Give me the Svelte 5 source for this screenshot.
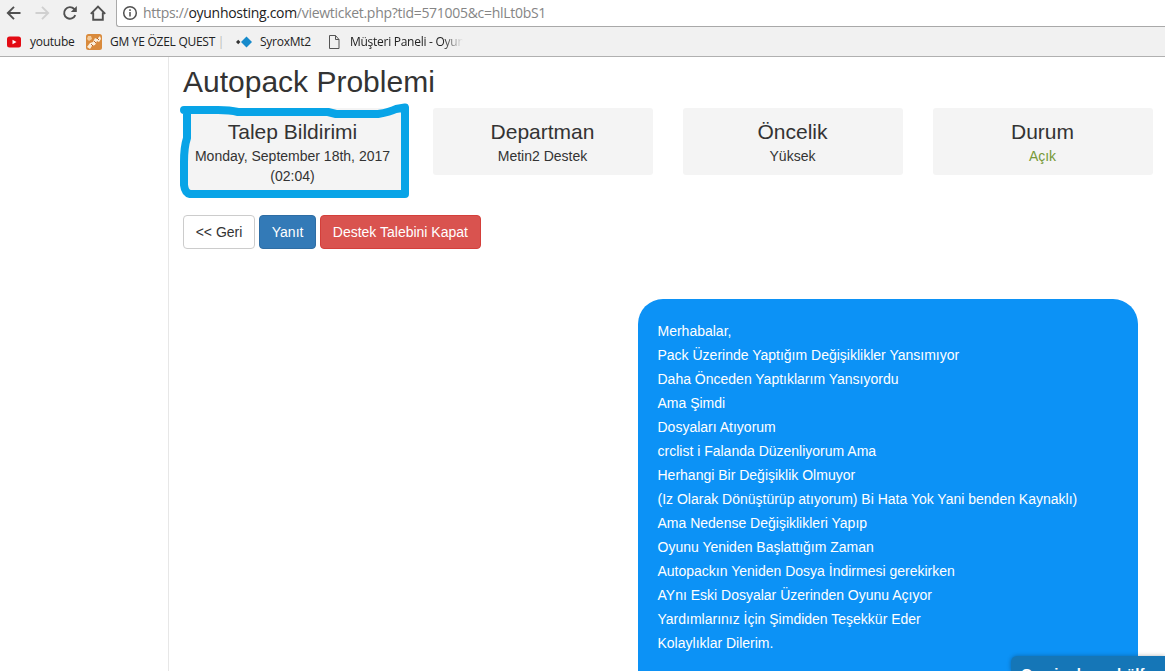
<script>
  const cards = [
    { title: 'Talep Bildirimi', value: 'Monday, September 18th, 2017 (02:04)', marked: true },
    { title: 'Departman', value: 'Metin2 Destek' },
    { title: 'Öncelik', value: 'Yüksek' },
    { title: 'Durum', value: 'Açık', open: true },
  ];

  const lines = [
    'Merhabalar,',
    'Pack Üzerinde Yaptığım Değişiklikler Yansımıyor',
    'Daha Önceden Yaptıklarım Yansıyordu',
    'Ama Şimdi',
    'Dosyaları Atıyorum',
    'crclist i Falanda Düzenliyorum Ama',
    'Herhangi Bir Değişiklik Olmuyor',
    '(Iz Olarak Dönüştürüp atıyorum) Bi Hata Yok Yani benden Kaynaklı)',
    'Ama Nedense Değişiklikleri Yapıp',
    'Oyunu Yeniden Başlattığım Zaman',
    'Autopackın Yeniden Dosya İndirmesi gerekirken',
    'AYnı Eski Dosyalar Üzerinden Oyunu Açıyor',
    'Yardımlarınız İçin Şimdiden Teşekkür Eder',
    'Kolaylıklar Dilerim.',
  ];
</script>

<div class="window">
  <header class="browser">
    <div class="toolbar">
      <nav class="nav">
        <svg width="16" height="16" viewBox="0 0 16 16"><path d="M14.5 8H2M8 1.8 1.8 8 8 14.2" /></svg>
        <svg class="off" width="16" height="16" viewBox="0 0 16 16"><path d="M1.5 8H14M8 1.8 14.2 8 8 14.2" /></svg>
        <svg width="16" height="16" viewBox="0 0 16 16"><path d="M13.3 10.2A5.8 5.8 0 1 1 12.2 4L13 5" /><path class="fill" d="M14.8 1V7H8.8Z" /></svg>
        <svg width="16" height="16" viewBox="0 0 16 16"><path d="M.8 8.8 8 1.6l7.2 7.2M3.2 7.4v7.4h9.6V7.4" /></svg>
      </nav>
      <div class="address">
        <svg width="16" height="16" viewBox="0 0 16 16"><circle cx="8" cy="8" r="6.3" /><path d="M8 7v4.5M8 4.3v1.6" /></svg>
        <span class="url">https://<b>oyunhosting.com</b>/viewticket.php?tid=571005&amp;c=hlLt0bS1</span>
      </div>
    </div>
    <div class="bookmarks">
      <span class="bookmark youtube">
        <svg width="16" height="16" viewBox="0 0 16 16"><rect x="1" y="2.5" width="14" height="11" rx="2.5" fill="#e30b14" /><path d="M6.5 5.8 10.5 8l-4 2.2Z" fill="#fff" /></svg>
        <span class="name">youtube</span>
      </span>
      <span class="bookmark quest">
        <svg width="16" height="16" viewBox="0 0 16 16"><rect width="16" height="16" rx="2.5" fill="#d98a3c" /><path d="M1 13 4 9l3-1 2-4 2 1 3-3 1 3-2 3-2-1-2 4-3 1-2 3Z" fill="#fbeeda" /><path d="M2 2h3l1 3-3 2-2-2Z" fill="#f3cb9b" /><path d="M5 10l2 2M8 7l2 2M11 4l2 2" stroke="#b9652a" /></svg>
        <span class="name">GM YE ÖZEL QUEST <i>|</i></span>
      </span>
      <span class="bookmark syrox">
        <svg width="16" height="16" viewBox="0 0 16 16"><path d="M0 8 2.2 5.8 4.4 8 2.2 10.2Z" fill="#333" /><path d="M5 8 10.5 2.5 16 8l-5.5 5.5Z" fill="#168acb" /></svg>
        <span class="name">SyroxMt2</span>
      </span>
      <span class="bookmark panel">
        <svg width="16" height="16" viewBox="0 0 16 16"><path d="M3.5 1.5h6l3.5 4v9H3.5ZM9.5 1.5v4H13" fill="none" stroke="#555" /></svg>
        <span class="name fade">Müşteri Paneli - Oyun</span>
      </span>
    </div>
  </header>

  <div class="page">
    <aside></aside>
    <main>
      <h1>Autopack Problemi</h1>
      <div class="cards">
        {#each cards as card}
          <section class="card" class:marked={card.marked}>
            <h2>{card.title}</h2>
            <p class:open={card.open}>{card.value}</p>
            {#if card.marked}
              <svg class="marker" width="234" height="100" viewBox="0 0 234 100">
                <path d="M6 8H40Q52 8 60 10H150L158 12H200Q212 10 218 7L227 5.5M9 9V36Q6 45 6 60V83Q7 91 12 92H227V6" />
              </svg>
            {/if}
          </section>
        {/each}
      </div>
      <div class="actions">
        <button>&lt;&lt; Geri</button>
        <button class="primary">Yanıt</button>
        <button class="danger">Destek Talebini Kapat</button>
      </div>
      <article class="message">
        {#each lines as line}
          <p>{line}</p>
        {/each}
      </article>
    </main>
  </div>

  <div class="chat">Çevrimdışı - hölf</div>
</div>

<style>
  .window {
    position: relative;
    height: 671px;
    display: flex;
    flex-direction: column;
    overflow: hidden;
    background: #fff;
    font-family: 'Liberation Sans', Arial, sans-serif;
    font-size: 14px;
    line-height: 20px;
    color: #333;
  }

  .browser {
    flex: none;
    height: 57px;
    box-sizing: border-box;
    background: #f1f1f1;
    border-bottom: 1px solid #b0b0b0;
    font-family: 'Open Sans', 'Noto Sans', sans-serif;
  }

  .toolbar {
    height: 27px;
    display: flex;
  }

  .nav {
    width: 116px;
    height: 26px;
    box-sizing: border-box;
    padding-left: 6px;
    display: flex;
    align-items: center;
    gap: 12px;
  }

  .nav svg,
  .address svg {
    flex: none;
    fill: none;
    stroke: #505050;
    stroke-width: 1.9;
  }

  .nav .off {
    stroke: #d0d0d0;
  }

  .nav .fill {
    fill: #505050;
    stroke: none;
  }

  .address {
    flex: 1;
    display: flex;
    align-items: center;
    gap: 5px;
    padding-left: 5px;
    background: #fff;
    border: solid #a9a9a9;
    border-width: 0 0 1px 1px;
    border-bottom-left-radius: 3px;
  }

  .address svg {
    stroke-width: 1.5;
  }

  .url {
    color: #858585;
    font-size: 14px;
    letter-spacing: -0.29px;
    white-space: nowrap;
  }

  .url b {
    color: #222;
    font-weight: 400;
  }

  .bookmarks {
    height: 29px;
    display: flex;
    align-items: center;
    padding-left: 6px;
    font-size: 12px;
    letter-spacing: -0.27px;
    color: #222;
  }

  .bookmark {
    display: flex;
    align-items: center;
    gap: 8px;
    white-space: nowrap;
  }

  .bookmark svg {
    flex: none;
  }

  .youtube {
    width: 80px;
  }

  .quest {
    width: 150px;
  }

  .quest i {
    color: #bbb;
    font-style: normal;
  }

  .syrox {
    width: 90px;
  }

  .panel {
    width: 137px;
  }

  .fade {
    width: 113px;
    overflow: hidden;
    mask-image: linear-gradient(to right, #000 82%, transparent);
  }

  .page {
    flex: 1;
    min-height: 0;
    display: flex;
  }

  aside {
    width: 169px;
    box-sizing: border-box;
    border-right: 1px solid #e7e7e7;
  }

  main {
    flex: 1;
    padding: 5px 12px 0 14px;
    display: flex;
    flex-direction: column;
  }

  h1 {
    margin: 0 0 7px;
    font-size: 30px;
    line-height: 39px;
    font-weight: 400;
  }

  .cards {
    height: 107px;
    display: flex;
    align-items: flex-start;
    gap: 30px;
  }

  .card {
    position: relative;
    width: 220px;
    box-sizing: border-box;
    padding: 10px 11px 9px 10px;
    background: #f4f4f4;
    border-radius: 3px;
    text-align: center;
  }

  h2 {
    margin: 0;
    font-size: 21px;
    line-height: 28px;
    font-weight: 400;
  }

  .card p {
    margin: 0;
  }

  .card .open {
    color: #779937;
  }

  .marker {
    position: absolute;
    left: -5px;
    top: -6px;
    fill: none;
    stroke: #08a4e7;
    stroke-width: 8;
    stroke-linecap: round;
    stroke-linejoin: round;
  }

  .actions {
    display: flex;
    gap: 4px;
  }

  button {
    height: 34px;
    padding: 0 11.7px;
    border: 1px solid #ccc;
    border-radius: 4px;
    background: #fff;
    color: #333;
    font: inherit;
  }

  .primary {
    background: #337ab7;
    border-color: #2e6da4;
    color: #fff;
  }

  .danger {
    background: #d9534f;
    border-color: #d43f3a;
    color: #fff;
  }

  .message {
    align-self: flex-end;
    width: 500px;
    flex: 1;
    box-sizing: border-box;
    margin: 50px 15px 0 0;
    padding: 20px 19px 0 19.5px;
    background: #0c92f6;
    border-radius: 25px 25px 0 0;
    color: #fff;
    line-height: 24px;
  }

  .message p {
    margin: 0;
  }

  .chat {
    position: absolute;
    right: 0;
    bottom: 0;
    width: 154px;
    height: 15px;
    box-sizing: border-box;
    padding: 8px 0 0 10px;
    overflow: hidden;
    white-space: nowrap;
    word-spacing: 3px;
    border-radius: 6px 0 0;
    background: #1576b7;
    box-shadow: 0 0 4px rgb(0 0 0 / 30%);
    color: #fff;
    font-size: 15px;
    font-weight: 700;
  }
</style>
